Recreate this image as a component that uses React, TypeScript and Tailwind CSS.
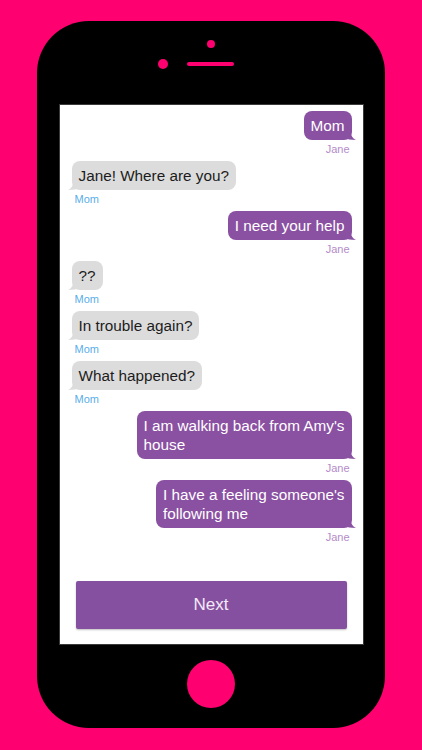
import React from 'react';

type Msg = { from: 'me' | 'mom'; lines: string[] };

const messages: Msg[] = [
  { from: 'me', lines: ['Mom'] },
  { from: 'mom', lines: ['Jane! Where are you?'] },
  { from: 'me', lines: ['I need your help'] },
  { from: 'mom', lines: ['??'] },
  { from: 'mom', lines: ['In trouble again?'] },
  { from: 'mom', lines: ['What happened?'] },
  { from: 'me', lines: ["I am walking back from Amy's", 'house'] },
  { from: 'me', lines: ["I have a feeling someone's", 'following me'] },
];

function Tail({ side, color }: { side: 'left' | 'right'; color: string }) {
  if (side === 'right') {
    return (
      <svg className="absolute bottom-0 -right-[4px]" width="12" height="12" viewBox="0 0 12 12">
        <path d="M0 0 L6 0 C6 6 8 10 12 12 C7 12 3 11 0 10 Z" fill={color} />
      </svg>
    );
  }
  return (
    <svg className="absolute bottom-0 -left-[4px]" width="12" height="12" viewBox="0 0 12 12">
      <path d="M12 0 L6 0 C6 6 4 10 0 12 C5 12 9 11 12 10 Z" fill={color} />
    </svg>
  );
}

function Bubble({ msg }: { msg: Msg }) {
  const mine = msg.from === 'me';
  return (
    <div className={`flex flex-col mb-[5px] ${mine ? 'items-end pr-[11px]' : 'items-start pl-[12px]'}`}>
      <div
        className={`relative rounded-[8px] px-[7px] py-[5px] text-[15.3px] leading-[19px] whitespace-nowrap ${
          mine ? 'bg-[#8a50a2] text-white' : 'bg-[#dcdcdc] text-[#1c1c1c]'
        }`}
      >
        <Tail side={mine ? 'right' : 'left'} color={mine ? '#8a50a2' : '#dcdcdc'} />
        <span className="relative">
          {msg.lines.map((l, i) => (
            <React.Fragment key={i}>
              {i > 0 && <br />}
              {l}
            </React.Fragment>
          ))}
        </span>
      </div>
      <div
        className={`mt-[2px] text-[11px] leading-[14px] ${
          mine ? 'text-[#b48bc8] pr-[2px]' : 'text-[#5aaeea] pl-[3px]'
        }`}
      >
        {mine ? 'Jane' : 'Mom'}
      </div>
    </div>
  );
}

export default function App() {
  return (
    <div
      className="w-[422px] h-[750px] bg-[#ff0070] pt-[21px] pl-[37px] overflow-hidden"
      style={{ fontFamily: '"Liberation Sans", Arial, sans-serif' }}
    >
      <div className="w-[348px] h-[707px] bg-black rounded-[52px] flex flex-col items-center">
        {/* earpiece */}
        <div className="w-[8px] h-[8px] rounded-full bg-[#ff0070] mt-[19px]" />
        <div className="flex items-center mt-[11px]">
          <div className="w-[10px] h-[10px] rounded-full bg-[#ff0070]" />
          <div className="w-[47px] h-[4px] rounded-full bg-[#ff0070] ml-[19px]" />
          <div className="w-[30px]" />
        </div>

        {/* screen */}
        <div className="mt-[35px] w-[305px] h-[541px] bg-white border border-[#3a3a3a] flex flex-col">
          <div className="flex-1 pt-[6px]">
            {messages.map((m, i) => (
              <Bubble key={i} msg={m} />
            ))}
          </div>
          <div className="px-[16px] pb-[15px]">
            <button className="w-full h-[48px] bg-[#8650a0] rounded-[2px] text-[#f3eaf7] text-[17px] shadow-[0_1px_2px_rgba(0,0,0,0.25)]">
              Next
            </button>
          </div>
        </div>

        {/* home button */}
        <div className="mt-[15px] w-[48px] h-[48px] rounded-full bg-[#ff0070]" />
      </div>
    </div>
  );
}
